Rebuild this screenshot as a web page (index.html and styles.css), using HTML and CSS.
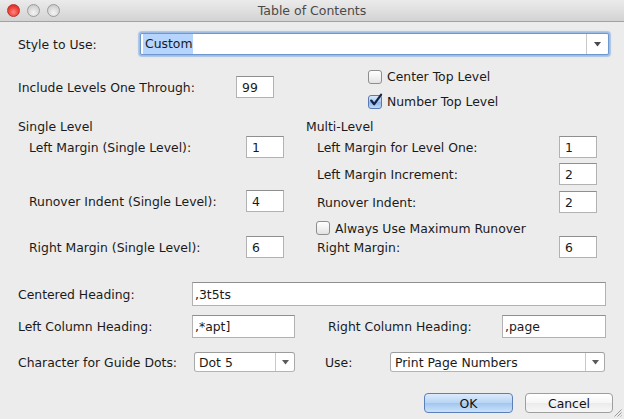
FILE: index.html
```html
<!DOCTYPE html>
<html>
<head>
<meta charset="utf-8">
<title>Table of Contents</title>
<link rel="stylesheet" href="styles.css">
</head>
<body>
<div class="window">
  <div class="titlebar">
    <div class="lights">
      <span class="light light-close"></span>
      <span class="light"></span>
      <span class="light"></span>
    </div>
    <div class="title">Table of Contents</div>
    <div class="title-spacer"></div>
  </div>

  <div class="content">
    <div class="row style-row">
      <span class="lbl lbl-style">Style to Use:</span>
      <div class="combo combo-focus">
        <span class="combo-text"><span class="sel">Custom</span></span>
        <span class="combo-btn"><svg width="7" height="5" viewBox="0 0 7 5"><polygon points="0,0 7,0 3.5,4.5" fill="#4a4a4a"/></svg></span>
      </div>
    </div>

    <div class="include-row">
      <div class="row include-left">
        <span class="lbl lbl-include">Include Levels One Through:</span>
        <span class="field field-99">99</span>
      </div>
      <div class="checks">
        <div class="check-line"><span class="cbox"></span>Center Top Level</div>
        <div class="check-line"><span class="cbox cbox-on"><svg width="16" height="16" viewBox="0 0 16 16"><path d="M3.2 7.6 L6.2 11.2 L13 1.8" fill="none" stroke="#16264a" stroke-width="2.3" stroke-linecap="round" stroke-linejoin="round"/></svg></span>Number Top Level</div>
      </div>
    </div>

    <div class="levels">
      <div class="col col-single">
        <div class="col-head">Single Level</div>
        <div class="frow gap-first"><span>Left Margin (Single Level):</span><span class="field num">1</span></div>
        <div class="frow gap-runover"><span>Runover Indent (Single Level):</span><span class="field num">4</span></div>
        <div class="frow gap-right"><span>Right Margin (Single Level):</span><span class="field num">6</span></div>
      </div>
      <div class="col col-multi">
        <div class="col-head">Multi-Level</div>
        <div class="frow gap-first"><span>Left Margin for Level One:</span><span class="field num">1</span></div>
        <div class="frow gap-five"><span>Left Margin Increment:</span><span class="field num">2</span></div>
        <div class="frow gap-six"><span>Runover Indent:</span><span class="field num">2</span></div>
        <div class="check-line check-always"><span class="cbox"></span>Always Use Maximum Runover</div>
        <div class="frow gap-one"><span>Right Margin:</span><span class="field num">6</span></div>
      </div>
    </div>

    <div class="row centered-row">
      <span class="lbl lbl-bottom">Centered Heading:</span>
      <span class="field field-text field-wide">,3t5ts</span>
    </div>

    <div class="row heading-row">
      <span class="lbl lbl-bottom">Left Column Heading:</span>
      <span class="field field-text field-col">,*apt]</span>
      <span class="lbl lbl-right">Right Column Heading:</span>
      <span class="field field-text field-col-r">,page</span>
    </div>

    <div class="row guide-row">
      <span class="lbl lbl-guide">Character for Guide Dots:</span>
      <div class="combo combo-small combo-dot">
        <span class="combo-text">Dot 5</span>
        <span class="combo-btn"><svg width="7" height="5" viewBox="0 0 7 5"><polygon points="0,0 7,0 3.5,4.5" fill="#5a5a5a"/></svg></span>
      </div>
      <span class="lbl lbl-use">Use:</span>
      <div class="combo combo-small combo-use">
        <span class="combo-text">Print Page Numbers</span>
        <span class="combo-btn"><svg width="7" height="5" viewBox="0 0 7 5"><polygon points="0,0 7,0 3.5,4.5" fill="#5a5a5a"/></svg></span>
      </div>
    </div>

    <div class="buttons">
      <button class="btn btn-default">OK</button>
      <button class="btn">Cancel</button>
    </div>
  </div>

  <svg class="grip" width="10" height="10" viewBox="0 0 10 10">
    <path d="M9.5 2.5 L2.5 9.5 M9.5 5.5 L5.5 9.5 M9.5 8.5 L8.5 9.5" stroke="#9a9a9a" stroke-width="1"/>
  </svg>
</div>
</body>
</html>
```

FILE: styles.css
```css
html, body {
  margin: 0;
  padding: 0;
}

body {
  font-family: "DejaVu Sans", "Noto Sans", sans-serif;
  font-size: 12.4px;
  color: #1a1a1a;
  background: #ececec;
}

.window {
  position: relative;
  width: 624px;
  height: 419px;
  background: #ececec;
  overflow: hidden;
}

/* title bar */
.titlebar {
  height: 21px;
  border-bottom: 1px solid #a2a2a2;
  background: linear-gradient(#ebebeb, #d3d3d3);
  display: flex;
  align-items: center;
}

.lights {
  width: 60px;
  padding-left: 7px;
  box-sizing: border-box;
  display: flex;
  gap: 7px;
}

.light {
  width: 13px;
  height: 13px;
  border-radius: 50%;
  box-sizing: border-box;
  border: 1px solid #9c9c9c;
  background: radial-gradient(circle at 50% 70%, #f4f4f4 0%, #d9d9d9 55%, #bdbdbd 100%);
}

.light-close {
  border-color: #b8342c;
  background: radial-gradient(circle at 50% 65%, #ff8a80 0%, #f0463c 50%, #c81e16 100%);
}

.title {
  flex: 1;
  text-align: center;
  font-size: 12.5px;
  color: #4a4a4a;
}

.title-spacer {
  width: 60px;
}

/* content */
.content {
  padding: 11px 0 0 18px;
}

.row {
  display: flex;
  align-items: center;
}

.lbl {
  white-space: nowrap;
}

.style-row {
  height: 22px;
}

.lbl-style {
  width: 122px;
}

/* combo boxes */
.combo {
  display: flex;
  align-items: stretch;
  box-sizing: border-box;
  background: #fff;
  border: 1px solid #a9a9a9;
  border-radius: 3px;
}

.combo-text {
  flex: 1;
  display: flex;
  align-items: center;
  padding-left: 4px;
  white-space: nowrap;
}

.combo-btn {
  width: 18px;
  border-left: 1px solid #c9c9c9;
  display: flex;
  align-items: center;
  justify-content: center;
}

.combo-focus {
  width: 469px;
  height: 22px;
  border-color: #6d98d0;
  border-radius: 2px;
  box-shadow: 0 0 0 1px #9dbde6, 0 0 1px 2px rgba(120, 165, 225, 0.55);
}

.combo-focus .combo-text {
  padding-left: 2px;
}

.combo-focus .combo-btn {
  width: 21px;
}

.sel {
  background: #b5d5ff;
  padding: 2px 1px 3px 2px;
}

.combo-small {
  height: 20px;
  border-top-color: #9c9c9c;
  border-bottom-color: #b4b4b4;
}

.combo-dot {
  width: 101px;
}

.combo-use {
  width: 215px;
}

/* fields */
.field {
  display: flex;
  align-items: center;
  box-sizing: border-box;
  height: 22px;
  padding-left: 5px;
  background: #fff;
  border: 1px solid #b2b2b2;
  border-top-color: #8f8f8f;
  white-space: nowrap;
}

.field-text {
  padding-left: 2px;
}

/* include row */
.include-row {
  display: flex;
  margin-top: 12px;
}

.include-left {
  width: 288px;
  align-self: flex-start;
  margin-top: 9px;
}

.lbl-include {
  width: 218px;
}

.field-99 {
  width: 38px;
}

.checks {
  padding-left: 62px;
}

.check-line {
  display: flex;
  align-items: center;
  gap: 5px;
  height: 19px;
  white-space: nowrap;
}

.check-line + .check-line {
  margin-top: 6px;
}

.cbox {
  position: relative;
  width: 14px;
  height: 14px;
  box-sizing: border-box;
  border: 1px solid #8e8e8e;
  border-radius: 3px;
  background: linear-gradient(#ffffff, #f2f2f2 50%, #e3e3e3);
  flex: none;
}

.cbox-on {
  border-color: #5a7bb0;
  background: linear-gradient(#d8e8fa, #a9c9ef 50%, #8fb7ea 51%, #bcd8f7);
}

.cbox-on svg {
  position: absolute;
  left: -1px;
  top: -3px;
}

/* levels */
.levels {
  display: flex;
  gap: 22px;
  margin-top: 7px;
}

.col {
  display: flex;
  flex-direction: column;
}

.col-single {
  width: 266px;
}

.col-multi {
  width: 291px;
}

.col-head {
  height: 16px;
  display: flex;
  align-items: center;
  white-space: nowrap;
}

.frow {
  display: flex;
  align-items: center;
  justify-content: space-between;
  height: 22px;
  padding-left: 11px;
  white-space: nowrap;
}

.num {
  width: 38px;
}

.gap-first { margin-top: 2px; }
.gap-runover { margin-top: 32px; }
.gap-right { margin-top: 24px; }
.gap-five { margin-top: 5px; }
.gap-six { margin-top: 6px; }
.gap-one { margin-top: 1px; }

.check-always {
  height: 14px;
  margin-top: 8px;
  padding-left: 10px;
}

/* bottom fields */
.centered-row {
  margin-top: 24px;
}

.lbl-bottom {
  width: 174px;
}

.field-wide {
  width: 414px;
  height: 24px;
}

.heading-row {
  margin-top: 9px;
}

.field-col {
  width: 103px;
  height: 23px;
}

.lbl-right {
  margin-left: 33px;
  width: 174px;
}

.field-col-r {
  width: 104px;
  height: 23px;
}

.guide-row {
  margin-top: 14px;
}

.lbl-guide {
  width: 176px;
}

.lbl-use {
  margin-left: 30px;
  width: 65px;
}

/* buttons */
.buttons {
  display: flex;
  justify-content: flex-end;
  gap: 12px;
  margin-top: 21px;
  padding-right: 11px;
}

.btn {
  box-sizing: border-box;
  width: 88px;
  height: 20px;
  padding: 0;
  font-family: "DejaVu Sans", "Noto Sans", sans-serif;
  font-size: 12.4px;
  color: #111;
  border: 1px solid #9e9e9e;
  border-radius: 4px;
  background: linear-gradient(#ffffff, #f6f6f6 50%, #ebebeb 51%, #f7f7f7);
}

.btn-default {
  width: 89px;
  border-color: #5b80b8;
  background: linear-gradient(#dcebfb, #b7d4f4 50%, #a2c6ef 51%, #cbe2fa);
}

.grip {
  position: absolute;
  right: 2px;
  bottom: 2px;
}
```
